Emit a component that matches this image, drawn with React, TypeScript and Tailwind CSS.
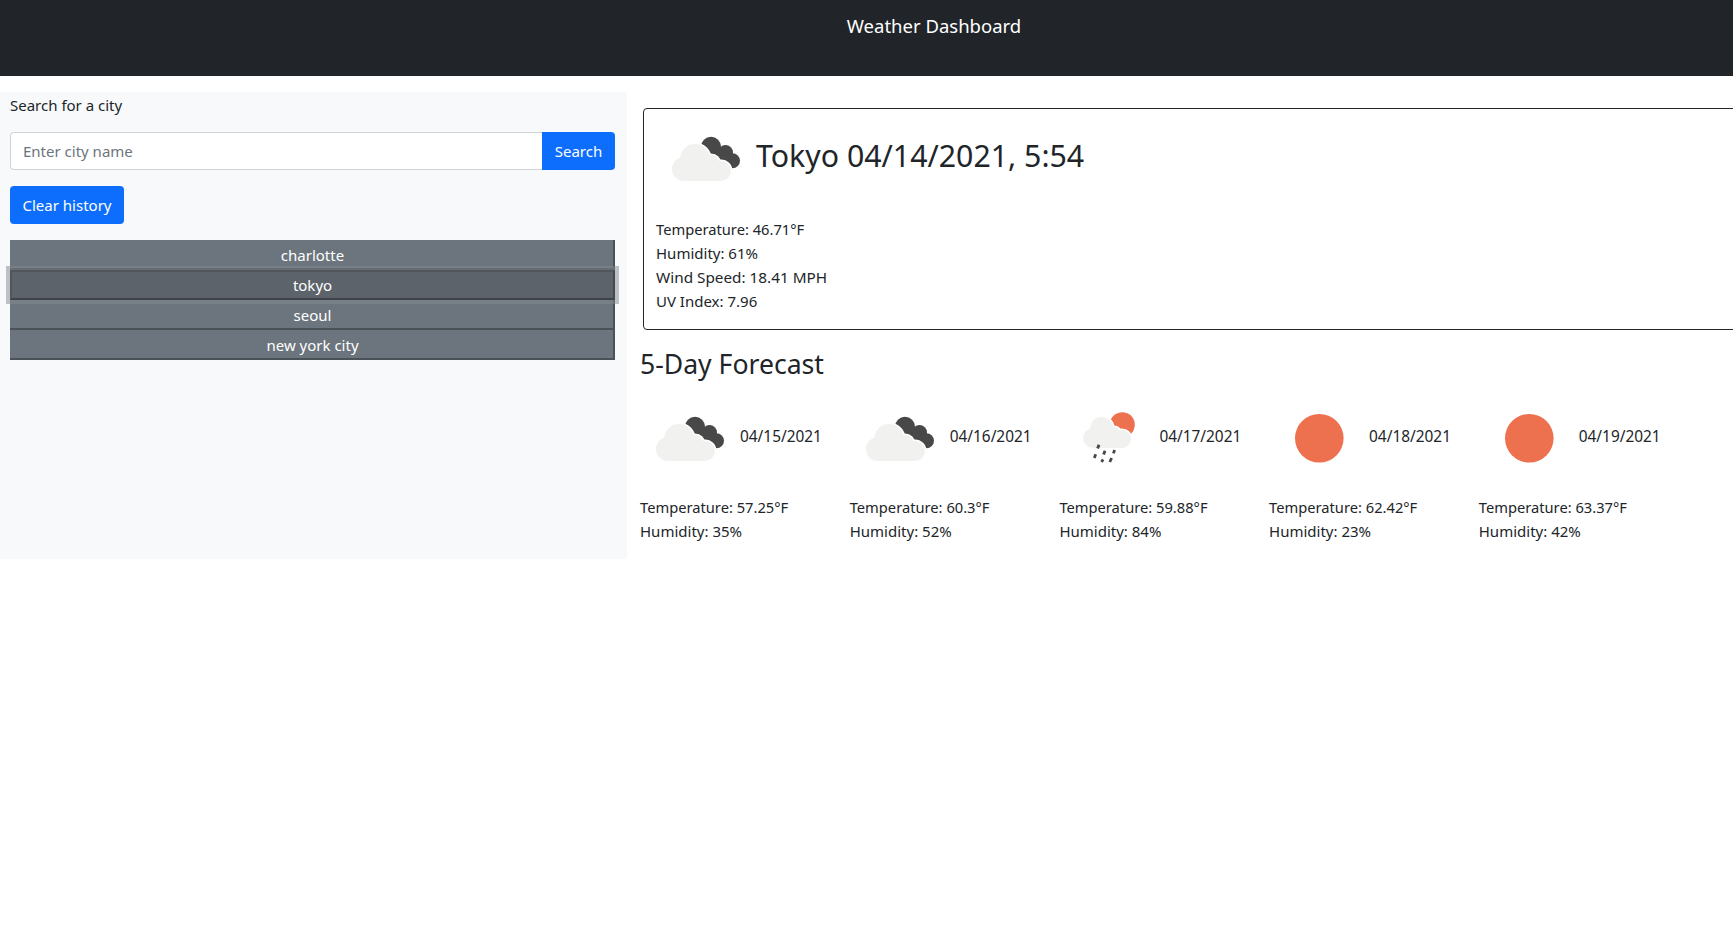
import React from "react";

const history = ["charlotte", "tokyo", "seoul", "new york city"];

const forecast = [
  { date: "04/15/2021", icon: "clouds", temp: "57.25", humidity: "35" },
  { date: "04/16/2021", icon: "clouds", temp: "60.3", humidity: "52" },
  { date: "04/17/2021", icon: "rain", temp: "59.88", humidity: "84" },
  { date: "04/18/2021", icon: "sun", temp: "62.42", humidity: "23" },
  { date: "04/19/2021", icon: "sun", temp: "63.37", humidity: "42" },
];

// light cloud shapes, painted once with a white halo and once on top of it
function BigCloud() {
  return (
    <>
      <circle cx="39" cy="50" r="15" />
      <circle cx="55" cy="55" r="9" />
      <circle cx="65" cy="62" r="10" />
      <circle cx="28" cy="60" r="12" />
      <rect x="28" y="54" width="37" height="18" />
    </>
  );
}

function SmallCloud() {
  return (
    <>
      <circle cx="42.7" cy="39.5" r="11.5" />
      <circle cx="55" cy="45" r="7" />
      <circle cx="63" cy="50" r="9" />
      <circle cx="34" cy="49" r="10" />
      <rect x="34" y="44" width="29" height="15" />
    </>
  );
}

function WeatherIcon({ kind }: { kind: string }) {
  return (
    <svg viewBox="0 0 100 100" className="w-[100px] h-[100px] shrink-0">
      {kind === "sun" && <circle cx="50.3" cy="49.3" r="24.3" fill="#ee714f" />}
      {kind === "clouds" && (
        <g>
          <g fill="#484848">
            <circle cx="55" cy="37.7" r="10" />
            <circle cx="69.5" cy="43.5" r="7.5" />
            <circle cx="76.5" cy="51.7" r="7.5" />
            <polygon points="50,38 62,38 72,46 76,54 70,58 55,50" />
          </g>
          <g fill="#ffffff" stroke="#ffffff" strokeWidth="3">
            <BigCloud />
          </g>
          <g fill="#f1f1f0">
            <BigCloud />
          </g>
        </g>
      )}
      {kind === "rain" && (
        <g>
          <circle cx="63.3" cy="35.7" r="12.5" fill="#ee714f" />
          <g fill="#ffffff" stroke="#ffffff" strokeWidth="3">
            <SmallCloud />
          </g>
          <g fill="#f1f1f0">
            <SmallCloud />
          </g>
          <g stroke="#484848" strokeWidth="2.8">
            <line x1="38.6" y1="59.6" x2="40" y2="55.8" />
            <line x1="35.3" y1="69" x2="36.7" y2="65.2" />
            <line x1="44.6" y1="65.6" x2="46" y2="61.8" />
            <line x1="54.4" y1="64.4" x2="55.6" y2="61" />
            <line x1="42.6" y1="73" x2="44" y2="70.4" />
            <line x1="50.8" y1="73" x2="52.6" y2="69" />
          </g>
        </g>
      )}
    </svg>
  );
}

export default function App() {
  return (
    <div className="w-full overflow-x-hidden min-h-[942px] bg-white text-[#212529] text-[15px] leading-6 font-['Noto_Sans',sans-serif]">
      <div className="w-[1868px]">
        {/* Header */}
        <header className="h-[76px] bg-[#212529] text-white text-center pt-3.5 text-[18.5px]">
          Weather Dashboard
        </header>

        <div className="flex items-start mt-4">
          {/* Sidebar */}
          <aside className="w-[627px] h-[467px] shrink-0 bg-[#f8f9fa] pl-[10px] pr-3">
            <p className="pt-[1px] h-[40px]">Search for a city</p>
            <div className="flex h-[38px]">
              <input
                placeholder="Enter city name"
                className="flex-1 min-w-0 bg-white border border-[#ced4da] border-r-0 rounded-l px-3 placeholder:text-[#6c757d] outline-none"
              />
              <button className="w-[73px] bg-[#0d6efd] text-white rounded-r">Search</button>
            </div>
            <button className="block mt-4 h-[38px] w-[114px] bg-[#0d6efd] text-white rounded">
              Clear history
            </button>
            <div className="mt-4 flex flex-col">
              {history.map((city) => (
                <button
                  key={city}
                  className={
                    city === "tokyo"
                      ? "relative h-[30px] bg-[#5c636a] text-white border-2 border-t-[#50565c] border-l-[#50565c] border-r-[#43494e] border-b-[#3d4348] shadow-[0_0_0_4px_rgba(130,138,145,0.5)]"
                      : "h-[30px] pl-0.5 pt-0.5 bg-[#6c757d] text-white border-r-2 border-b-2 border-[#4a5157]"
                  }
                >
                  {city}
                </button>
              ))}
            </div>
          </aside>

          {/* Main */}
          <main className="flex-1 pl-[13px]">
            <section className="ml-[3px] mt-4 h-[222px] border border-[#212529] rounded pl-3">
              <div className="flex items-center h-[100px]">
                <WeatherIcon kind="clouds" />
                <h2 className="text-[30.3px] leading-[38px] pb-1.5">Tokyo 04/14/2021, 5:54</h2>
              </div>
              <div className="mt-[8px]">
                <p className="text-[14.7px]">Temperature: 46.71°F</p>
                <p>Humidity: 61%</p>
                <p className="text-[15.3px]">Wind Speed: 18.41 MPH</p>
                <p>UV Index: 7.96</p>
              </div>
            </section>

            <h3 className="text-[26.6px] leading-[34px] mt-[17px]">5-Day Forecast</h3>

            <div className="flex mt-[8px]">
              {forecast.map((day) => (
                <div key={day.date} className="w-[209.7px] shrink-0">
                  <div className="flex items-center h-[100px]">
                    <WeatherIcon kind={day.icon} />
                    <span className="pb-[5px] text-[15.4px]">{day.date}</span>
                  </div>
                  <div className="mt-[6px] text-[14.7px]">
                    <p>Temperature: {day.temp}°F</p>
                    <p className="text-[15px]">Humidity: {day.humidity}%</p>
                  </div>
                </div>
              ))}
            </div>
          </main>
        </div>
      </div>
    </div>
  );
}
